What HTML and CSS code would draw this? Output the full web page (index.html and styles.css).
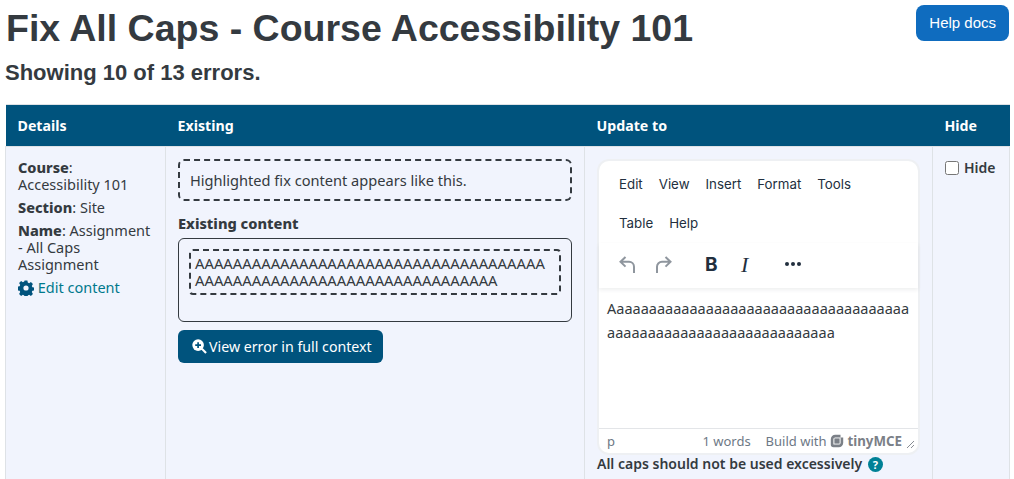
FILE: index.html
```html
<!doctype html>
<html>
    <head>
        <title>Fix All Caps</title>
        <meta charset="UTF-8">
        <meta name="viewport" content="width=device-width, initial-scale=1">
        <link rel="stylesheet" href="styles.css">
    </head>
    <body>
        <header class="top">
            <div>
                <h1>Fix All Caps - Course Accessibility 101</h1>
                <h2>Showing 10 of 13 errors.</h2>
            </div>
            <a class="help" href="#">Help docs</a>
        </header>

        <table class="errors">
            <colgroup>
                <col class="col-details">
                <col class="col-existing">
                <col class="col-update">
                <col class="col-hide">
            </colgroup>
            <thead>
                <tr>
                    <th>Details</th>
                    <th>Existing</th>
                    <th>Update to</th>
                    <th>Hide</th>
                </tr>
            </thead>
            <tbody>
                <tr>
                    <td class="details">
                        <p><b>Course</b>:<br>Accessibility 101</p>
                        <p><b>Section</b>: Site</p>
                        <p><b>Name</b>: Assignment - All Caps Assignment</p>
                        <a class="edit" href="#">
                            <svg class="gear" viewBox="0 0 16 16"><path d="M6.600.6h2.800l.4 2 1.300.6 1.800-1.100 2 2-1.100 1.800.6 1.300 2 .4v2.800l-2 .4-.6 1.300 1.100 1.800-2 2-1.800-1.100-1.300.6-.4 2H6.600l-.4-2-1.300-.6-1.800 1.100-2-2 1.100-1.800-.6-1.300-2-.4V6.600l2-.4.6-1.300L1.100 3.100l2-2 1.800 1.100 1.300-.6zM8 5.400a2.600 2.600 0 1 0 0 5.200 2.600 2.600 0 0 0 0-5.200z" fill-rule="evenodd"/></svg>
                            Edit content
                        </a>
                    </td>
                    <td class="existing">
                        <div class="legend">Highlighted fix content appears like this.</div>
                        <h3>Existing content</h3>
                        <div class="content-box">
                            <div class="highlight">AAAAAAAAAAAAAAAAAAAAAAAAAAAAAAAAAAAAA<br>AAAAAAAAAAAAAAAAAAAAAAAAAAAAAAAA</div>
                        </div>
                        <a class="context" href="#"><svg class="zoom" viewBox="0 0 16 16"><circle cx="6.500" cy="6.500" r="6.200"/><path d="M10.500 10.500 15 15" stroke="#fff" stroke-width="2.200"/><path d="M5.600 3.400h1.800v2.200h2.200v1.800H7.400v2.200H5.600V7.400H3.400V5.600h2.200z" fill="#00537d"/></svg>View error in full context</a>
                    </td>
                    <td class="update">
                        <div class="editor">
                            <div class="menubar">
                                <span>Edit</span><span>View</span><span>Insert</span><span>Format</span><span>Tools</span>
                                <span>Table</span><span>Help</span>
                            </div>
                            <div class="toolbar">
                                <svg class="undo" viewBox="0 0 16 17"><path d="M6.500 1 1.500 5.800l5 4.800M1.500 5.800H10a5 5 0 0 1 5 5V17"/></svg>
                                <svg class="redo" viewBox="0 0 16 17"><path d="M9.500 1l5 4.800-5 4.800M14.500 5.800H6a5 5 0 0 0-5 5V17"/></svg>
                                <span class="tool-b">B</span>
                                <span class="tool-i">I</span>
                                <svg class="more" viewBox="0 0 16 4"><circle cx="2" cy="2" r="2"/><circle cx="8" cy="2" r="2"/><circle cx="14" cy="2" r="2"/></svg>
                            </div>
                            <div class="editarea">Aaaaaaaaaaaaaaaaaaaaaaaaaaaaaaaaaaaaa<br>aaaaaaaaaaaaaaaaaaaaaaaaaaaa</div>
                            <div class="statusbar">
                                <span class="path">p</span>
                                <span class="words">1 words</span>
                                <span class="brand">Build with
                                    <svg class="tiny-logo" viewBox="0 0 16 16"><path d="M12 2.400H6A3.600 3.600 0 0 0 2.400 6v6A1.600 1.600 0 0 0 4 13.600h6a3.600 3.600 0 0 0 3.600-3.600V4"/><path d="M6.500 6.500h3v3h-3z"/></svg><span class="tiny">tinyMCE</span></span>
                                <svg class="grip" viewBox="0 0 10 10"><path d="M9 2 2 9M9 6 6 9" stroke="#888d94" stroke-width="1" fill="none"/></svg>
                            </div>
                        </div>
                        <div class="hint">All caps should not be used excessively <span class="q">?</span></div>
                    </td>
                    <td class="hide">
                        <label><input type="checkbox"> Hide</label>
                    </td>
                </tr>
            </tbody>
        </table>
    </body>
</html>
```

FILE: styles.css
```css
html {
    overflow: hidden;
}

body {
    margin: 0;
    padding: 5px 5px 0 5px;
    font-family: "Noto Sans", sans-serif;
    font-size: 14.5px;
    line-height: 17px;
    color: #343a40;
    background: #fff;
}

.top {
    display: flex;
    justify-content: space-between;
    align-items: flex-start;
    height: 99px;
}

h1 {
    margin: 1px 0 0 1px;
    font-family: "Liberation Sans", sans-serif;
    font-size: 37.500px;
    line-height: 44px;
    font-weight: bold;
}

h2 {
    margin: 11px 0 0 0;
    font-family: "Liberation Sans", sans-serif;
    font-size: 22px;
    line-height: 24px;
    font-weight: bold;
}

.help {
    display: block;
    font-family: "Liberation Sans", sans-serif;
    font-size: 15px;
    line-height: 18px;
    color: #fff;
    background: #0f6cbf;
    border-radius: 8px;
    padding: 9px 13px;
    text-decoration: none;
    white-space: nowrap;
}

.errors {
    width: 1004px;
    table-layout: fixed;
    border-collapse: collapse;
}

.col-details { width: 160px; }
.col-existing { width: 419px; }
.col-update { width: 348px; }
.col-hide { width: 77px; }

th {
    background: #00537d;
    color: #fff;
    text-align: left;
    font-size: 14.200px;
    font-weight: bold;
    height: 41px;
    padding: 0 12px;
    border-top: 1px solid #dee2e6;
    border-bottom: 1px solid #dee2e6;
}

td {
    background: #f1f4fd;
    border: 1px solid #dee2e6;
    vertical-align: top;
    padding: 12px;
}

.details p {
    margin: 0 0 6px 0;
}

.details b, h3 {
    font-weight: 800;
}

.edit {
    color: #00798c;
    text-decoration: none;
    display: block;
}

.gear {
    width: 16px;
    height: 16px;
    fill: #00537d;
    vertical-align: -3px;
}

.legend {
    border: 2px dashed #343a40;
    border-radius: 6px;
    padding: 8px 10px;
    height: 42px;
    box-sizing: border-box;
    white-space: nowrap;
    font-size: 14.600px;
    line-height: 22px;
}

h3 {
    margin: 14px 0 6px 0;
    font-size: 14.600px;
    line-height: 17px;
}

.content-box {
    border: 1px solid #343a40;
    border-radius: 6px;
    padding: 10px;
    height: 84px;
    box-sizing: border-box;
}

.highlight {
    border: 2px dashed #343a40;
    border-radius: 4px;
    padding: 4px 4px;
    white-space: nowrap;
    font-size: 14.800px;
}

.context {
    display: inline-block;
    margin-top: 8px;
    background: #00537d;
    color: #fff;
    font-size: 14.200px;
    border-radius: 6px;
    padding: 8px 11px 8px 14px;
    text-decoration: none;
}

.zoom {
    width: 15px;
    height: 15px;
    fill: #fff;
    vertical-align: -2px;
    margin-right: 2px;
}

.update {
    padding-bottom: 60px;
}

.editor {
    height: 292px;
    margin: 2px 2px 0 2px;
    background: #fff;
    border-radius: 10px;
    box-shadow: 0 0 0 2px #eef0f3;
    display: flex;
    flex-direction: column;
    font-family: Inter, sans-serif;
    color: #222f3e;
}

.menubar {
    height: 78px;
    padding: 4px 40px 0 20px;
    display: flex;
    flex-wrap: wrap;
    column-gap: 16px;
    font-size: 13.300px;
    line-height: 39px;
}

.toolbar {
    height: 45px;
    display: flex;
    align-items: center;
    padding: 0 0 3px 20px;
    box-sizing: border-box;
    box-shadow: 0 2px 4px rgba(34, 47, 62, .08);
}

.undo, .redo {
    width: 16px;
    height: 17px;
    fill: none;
    stroke: #8f969e;
    stroke-width: 2;
    flex: none;
}

.undo {
    margin-right: 21px;
}

.tool-b {
    margin-left: 33px;
    font-size: 19px;
    font-weight: bold;
    width: 36px;
}

.tool-i {
    font-family: "Liberation Serif", serif;
    font-style: italic;
    font-size: 22px;
    width: 44px;
}

.more {
    width: 16px;
    height: 4px;
    fill: #222f3e;
}

.editarea {
    flex: 1;
    padding: 8px 8px;
    font-family: "Noto Sans", sans-serif;
    font-size: 14.500px;
    line-height: 24px;
    white-space: nowrap;
    color: #343a40;
}

.statusbar {
    height: 25px;
    border-top: 1px solid #e3e5e8;
    display: flex;
    align-items: center;
    font-family: "Noto Sans", sans-serif;
    font-size: 13px;
    color: #6d7885;
    padding: 0 3px 0 8px;
    box-sizing: border-box;
}

.words {
    margin-left: auto;
    margin-right: 15px;
}

.brand {
    display: flex;
    align-items: center;
    gap: 4px;
}

.tiny-logo {
    width: 14px;
    height: 14px;
    fill: none;
    stroke: #7b8087;
    stroke-width: 3;
}

.tiny {
    font-weight: bold;
    font-size: 13.300px;
    color: #7b8087;
    margin-left: -1px;
}

.grip {
    width: 10px;
    height: 10px;
    margin: 6px 0 0 3px;
}

.hint {
    margin: 2px 0 0 0;
    font-size: 14px;
    font-weight: 600;
}

.q {
    display: inline-block;
    width: 15px;
    height: 15px;
    border-radius: 50%;
    background: #008196;
    color: #fff;
    font-size: 11px;
    line-height: 15px;
    text-align: center;
    font-weight: bold;
    margin-left: 2px;
}

.hide label {
    font-weight: 600;
    font-size: 14px;
    display: flex;
    align-items: center;
    gap: 5px;
}

.hide input {
    margin: 0;
    width: 14px;
    height: 14px;
}
```
